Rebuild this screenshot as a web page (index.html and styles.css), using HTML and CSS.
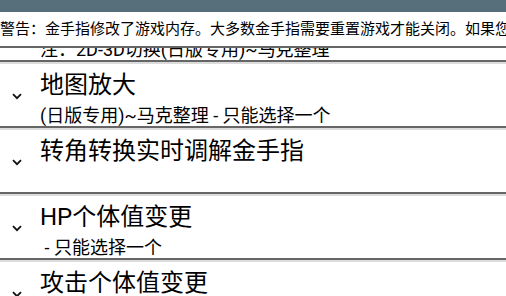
FILE: index.html
```html
<!DOCTYPE html>
<html lang="zh">
<head>
<meta charset="utf-8">
<link rel="stylesheet" href="styles.css">
</head>
<body>
<div class="appbar"></div>
<div class="warning">警告：金手指修改了游戏内存。大多数金手指需要重置游戏才能关闭。如果您想关闭金手指，请重置游戏。</div>
<div class="list">
  <div class="list-inner">
    <div class="item">
      <div class="chev"><svg width="10" height="7" viewBox="0 0 10 7"><polyline points="1,1.2 5,5.2 9,1.2" fill="none" stroke="#111" stroke-width="1.8"/></svg></div>
      <div class="text"><div class="title">2D-3D切换</div><div class="sub">注：2D-3D切换(日版专用)~马克整理</div></div>
    </div>
    <div class="item">
      <div class="chev"><svg width="10" height="7" viewBox="0 0 10 7"><polyline points="1,1.2 5,5.2 9,1.2" fill="none" stroke="#111" stroke-width="1.8"/></svg></div>
      <div class="text"><div class="title">地图放大</div><div class="sub">(日版专用)~马克整理 - 只能选择一个</div></div>
    </div>
    <div class="item">
      <div class="chev"><svg width="10" height="7" viewBox="0 0 10 7"><polyline points="1,1.2 5,5.2 9,1.2" fill="none" stroke="#111" stroke-width="1.8"/></svg></div>
      <div class="text"><div class="title">转角转换实时调解金手指</div><div class="sub"></div></div>
    </div>
    <div class="item">
      <div class="chev"><svg width="10" height="7" viewBox="0 0 10 7"><polyline points="1,1.2 5,5.2 9,1.2" fill="none" stroke="#111" stroke-width="1.8"/></svg></div>
      <div class="text"><div class="title">HP个体值变更</div><div class="sub">&nbsp;- 只能选择一个</div></div>
    </div>
    <div class="item">
      <div class="chev"><svg width="10" height="7" viewBox="0 0 10 7"><polyline points="1,1.2 5,5.2 9,1.2" fill="none" stroke="#111" stroke-width="1.8"/></svg></div>
      <div class="text"><div class="title">攻击个体值变更</div><div class="sub">&nbsp;- 只能选择一个</div></div>
    </div>
  </div>
</div>
</body>
</html>
```
FILE: styles.css
```css
html, body {
  margin: 0;
  padding: 0;
  background: #ffffff;
}
body {
  width: 506px;
  height: 296px;
  overflow: hidden;
  font-family: Roboto, "Noto Sans CJK SC", sans-serif;
  color: #000;
  display: flex;
  flex-direction: column;
}
.appbar {
  height: 12px;
  background: #566f7b;
  flex: none;
}
.warning {
  flex: none;
  box-sizing: border-box;
  height: 36px;
  line-height: 34px;
  font-size: 15px;
  white-space: nowrap;
  overflow: hidden;
  border-bottom: 2px solid #666;
}
.list {
  flex: 1;
  overflow: hidden;
}
.list-inner {
  margin-top: -50px;
}
.item {
  display: flex;
  height: 62px;
  border-bottom: 2px solid #666;
}
.item + .item {
  border-top: 2px solid #dcdcdc;
}
.chev {
  width: 40px;
  flex: none;
  padding-left: 12px;
  padding-top: 29px;
  box-sizing: border-box;
}
.chev svg { display: block; }
.text {
  flex: 1;
  padding-top: 4px;
  white-space: nowrap;
  overflow: hidden;
}
.title {
  font-size: 24px;
  line-height: 34px;
  height: 34px;
}
.sub {
  margin-top: 3px;
  font-size: 18px;
  line-height: 22px;
  height: 22px;
}
```
